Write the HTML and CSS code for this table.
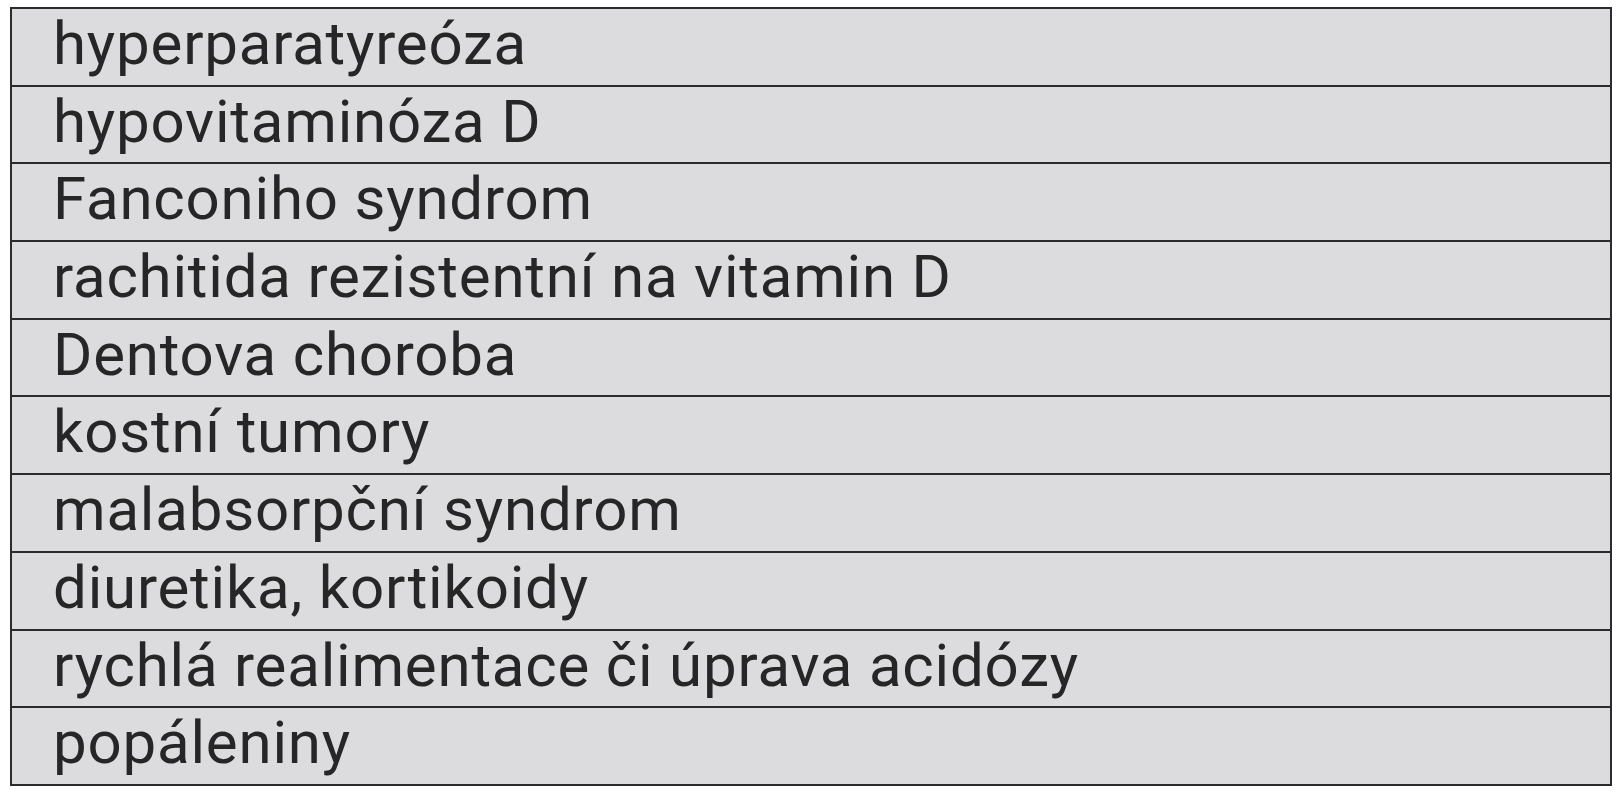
FILE: index.html
```html
<!DOCTYPE html>
<html lang="cs">
<head>
<meta charset="utf-8">
<title>Tabulka</title>
<link rel="stylesheet" href="styles.css">
</head>
<body>
<div class="table">
  <div class="row">hyperparatyreóza</div>
  <div class="row">hypovitaminóza D</div>
  <div class="row">Fanconiho syndrom</div>
  <div class="row">rachitida rezistentní na vitamin D</div>
  <div class="row">Dentova choroba</div>
  <div class="row">kostní tumory</div>
  <div class="row">malabsorpční syndrom</div>
  <div class="row">diuretika, kortikoidy</div>
  <div class="row">rychlá realimentace či úprava acidózy</div>
  <div class="row">popáleniny</div>
</div>
</body>
</html>
```

FILE: styles.css
```css
html, body {
  margin: 0;
  padding: 0;
  background: #ffffff;
}
body {
  padding: 7px 0 0 10px;
}
.table {
  width: 1598px;
  border: 2px solid #2b2b2b;
  background: #dcdcde;
  display: flex;
  flex-direction: column;
}
.row {
  height: 75.7px;
  box-sizing: content-box;
  padding-left: 41px;
  font-family: Roboto, "Liberation Sans", sans-serif;
  font-size: 60px;
  letter-spacing: 0.8px;
  line-height: 70px;
  color: #262626;
  border-top: 2px solid #2b2b2b;
  white-space: nowrap;
}
.row:first-child {
  border-top: none;
}
```
